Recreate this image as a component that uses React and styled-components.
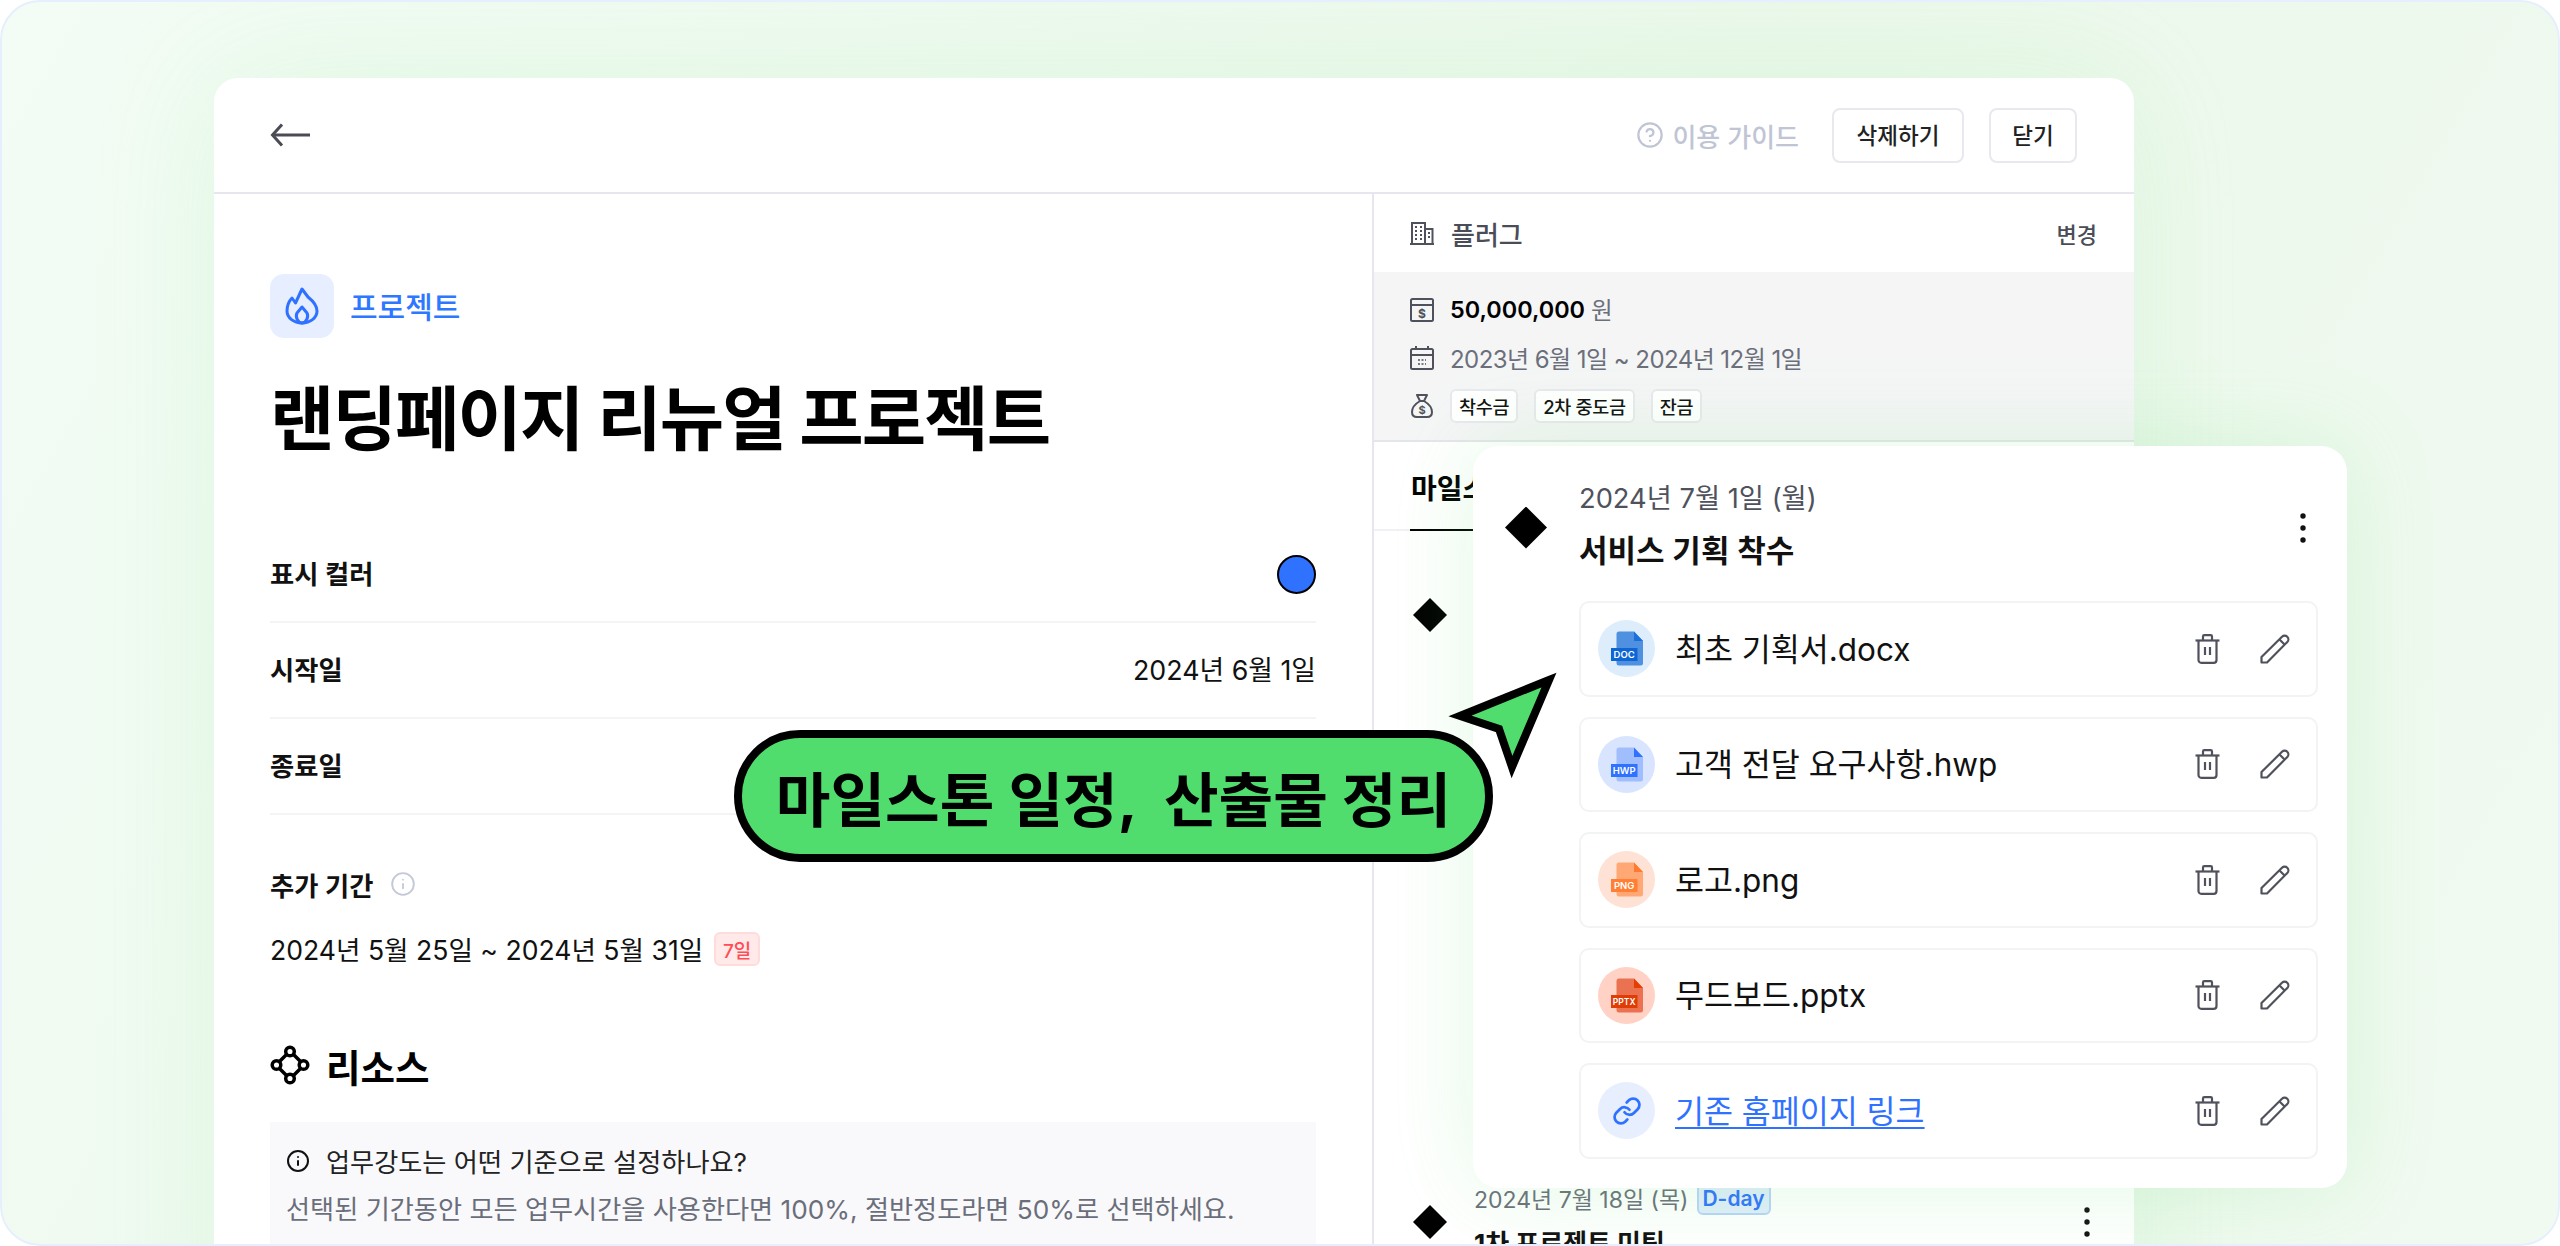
import React from 'react';
import styled, { createGlobalStyle } from 'styled-components';
import { CircleHelp, Info, Link } from 'lucide-react';

const files = [
  { name: '최초 기획서.docx', tag: 'DOC', circle: '#deedfb', page: '#4f90e0', fold: '#1a6fdc', label: '#0e66d4' },
  { name: '고객 전달 요구사항.hwp', tag: 'HWP', circle: '#d9e5ff', page: '#a0bdfd', fold: '#2e72ff', label: '#2e72ff' },
  { name: '로고.png', tag: 'PNG', circle: '#ffe2d6', page: '#ffa875', fold: '#ff7a2e', label: '#ff7f35' },
  { name: '무드보드.pptx', tag: 'PPTX', circle: '#ffd2c5', page: '#eb7250', fold: '#e63d00', label: '#e03c05' },
];

const GlobalStyle = createGlobalStyle`
  * { box-sizing: border-box; }
  body {
    margin: 0;
    background: #fff;
    font-family: Inter, "Noto Sans CJK KR", sans-serif;
  }
`;

const BackIcon = () => (
  <svg width="40" height="24" viewBox="0 0 40 24" fill="none" stroke="#4a4b55" strokeWidth="3">
    <path d="M40 12H3" />
    <path d="M12 1.500 2.500 12l9.500 10.500" />
  </svg>
);

const FlameIcon = () => (
  <svg width="34" height="38" viewBox="0 0 34 38" fill="none" stroke="#2f72ff" strokeWidth="3" strokeLinejoin="round">
    <path d="M17 2l6 8c5 4 9 9 9 14 0 7-7 12-15 12S2 31 2 24c0-5 2-10 5-13l3.500 5L17 2z" />
    <path d="M17 20l5 6c2 4-1 10-5 10s-7-6-5-10l5-6z" />
  </svg>
);

const BuildingIcon = () => (
  <svg width="24" height="24" viewBox="0 0 24 24" fill="none" stroke="#4f525c" strokeWidth="2">
    <path d="M2 23V2h13v21M15 8h7.500v15M0 23h24" />
    <path d="M5 6h2M10 6h2M5 10h2M10 10h2M5 14h2M10 14h2M5 18h2M10 18h2M18 12h2M18 16h2" strokeDasharray="2 1" />
  </svg>
);

const CashIcon = () => (
  <svg width="24" height="24" viewBox="0 0 24 24" fill="none" stroke="#4f525c" strokeWidth="2">
    <rect x="1" y="1" width="22" height="22" rx="1.500" />
    <path d="M1 7h22" />
    <text x="12" y="20" fontSize="12" fontWeight="700" textAnchor="middle" fill="#4f525c" stroke="none" fontFamily="Inter">$</text>
  </svg>
);

const CalendarIcon = () => (
  <svg width="24" height="24" viewBox="0 0 24 24" fill="none" stroke="#4f525c" strokeWidth="2">
    <rect x="1" y="3" width="22" height="20" rx="1.500" />
    <path d="M1 9h22M6 0v4M18 0v4" />
    <path d="M8 14h8M8 18h8" strokeDasharray="2 1.500" strokeWidth="1.500" />
  </svg>
);

const BagIcon = () => (
  <svg width="24" height="24" viewBox="0 0 24 24" fill="none" stroke="#4f525c" strokeWidth="2" strokeLinejoin="round">
    <path d="M7 1h10l-3 6h-4L7 1z" />
    <path d="M10 7C5 10 2 14 2 18c0 3 2 5 5 5h10c3 0 5-2 5-5 0-4-3-8-8-11" />
    <text x="12" y="20" fontSize="11" fontWeight="700" textAnchor="middle" fill="#4f525c" stroke="none" fontFamily="Inter">$</text>
  </svg>
);

const ResourceIcon = () => (
  <svg width="40" height="40" viewBox="0 0 40 40" fill="none" stroke="#000" strokeWidth="3.500">
    <circle cx="20" cy="6.500" r="4.300" />
    <circle cx="33.500" cy="20" r="4.300" />
    <circle cx="20" cy="33.500" r="4.300" />
    <circle cx="6.500" cy="20" r="4.300" />
    <path d="M23.500 9.500l7 7M30.500 23.500l-7 7M16.500 30.500l-7-7M9.500 16.500l7-7" />
  </svg>
);

const TrashIcon = () => (
  <svg width="25" height="30" viewBox="0 0 25 30" fill="none" stroke="#4f525c" strokeWidth="2.200">
    <path d="M0.500 6.500h24" />
    <path d="M8 6.500V2.500a1.300 1.300 0 0 1 1.300-1.300h6.400A1.300 1.300 0 0 1 17 2.500v4" />
    <path d="M3.500 6.500V26a2.800 2.800 0 0 0 2.800 2.800h12.400a2.800 2.800 0 0 0 2.800-2.800V6.500" />
    <path d="M10 13v8M15 13v8" />
  </svg>
);

const PencilIcon = () => (
  <svg width="30" height="30" viewBox="0 0 30 30" fill="none" stroke="#4f525c" strokeWidth="2.200" strokeLinejoin="round">
    <path d="M1.500 28.500V23L22 2.800a3.700 3.700 0 0 1 5.300 5.200L7 28.500H1.500z" />
    <path d="M19.500 5.500l5.300 5.200" />
  </svg>
);

const KebabIcon = () => (
  <svg width="6" height="30" viewBox="0 0 6 30" fill="#111">
    <circle cx="3" cy="3" r="2.700" />
    <circle cx="3" cy="15" r="2.700" />
    <circle cx="3" cy="27" r="2.700" />
  </svg>
);

const FileIcon = ({ tag, circle, page, fold, label }) => (
  <svg width="57" height="57" viewBox="0 0 57 57">
    <circle cx="28.500" cy="28.500" r="28.500" fill={circle} />
    <path d="M21 11.500h15L45 21v22a2.500 2.500 0 0 1-2.500 2.500H21a2.500 2.500 0 0 1-2.500-2.500V14a2.500 2.500 0 0 1 2.500-2.500z" fill={page} />
    <path d="M36 11.500L45 21h-9z" fill={fold} />
    <rect x="13" y="28" width="26.500" height="13" fill={label} />
    <text x="26.200" y="38" fontSize={tag.length > 3 ? 8.500 : 9.500} fontWeight="600" textAnchor="middle" fill="#fff" fontFamily="Inter">{tag}</text>
  </svg>
);

const App = () => (
  <Frame>
    <GlobalStyle />
    <Panel>
      <Header>
        <BackIcon />
        <HeaderActions>
          <Guide>
            <CircleHelp size={28} strokeWidth={1.900} />
            이용 가이드
          </Guide>
          <HeaderButton $width={132}>삭제하기</HeaderButton>
          <HeaderButton $width={88}>닫기</HeaderButton>
        </HeaderActions>
      </Header>
      <Body>
        <LeftColumn>
          <Kind>
            <KindTile><FlameIcon /></KindTile>
            <KindName>프로젝트</KindName>
          </Kind>
          <Title>랜딩페이지 리뉴얼 프로젝트</Title>
          <Fields>
            <Field>
              <FieldLabel>표시 컬러</FieldLabel>
              <ColorDot />
            </Field>
            <Field>
              <FieldLabel>시작일</FieldLabel>
              <FieldValue>2024년 6월 1일</FieldValue>
            </Field>
            <Field>
              <FieldLabel>종료일</FieldLabel>
            </Field>
          </Fields>
          <ExtraLabel>
            추가 기간
            <Info size={26} strokeWidth={1.700} color="#c4c9d9" />
          </ExtraLabel>
          <ExtraValue>
            2024년 5월 25일 ~ 2024년 5월 31일
            <DayBadge>7일</DayBadge>
          </ExtraValue>
          <SectionTitle>
            <ResourceIcon />
            리소스
          </SectionTitle>
          <HelpBox>
            <HelpTitle>
              <Info size={24} strokeWidth={2} color="#111" />
              업무강도는 어떤 기준으로 설정하나요?
            </HelpTitle>
            <HelpText>선택된 기간동안 모든 업무시간을 사용한다면 100%, 절반정도라면 50%로 선택하세요.</HelpText>
          </HelpBox>
        </LeftColumn>
        <RightColumn>
          <ClientRow>
            <ClientName><BuildingIcon />플러그</ClientName>
            <ChangeLink>변경</ChangeLink>
          </ClientRow>
          <Contract>
            <ContractRow>
              <CashIcon />
              <Amount>50,000,000</Amount>
              <Unit>원</Unit>
            </ContractRow>
            <ContractRow>
              <CalendarIcon />
              <Period>2023년 6월 1일 ~ 2024년 12월 1일</Period>
            </ContractRow>
            <ContractRow>
              <BagIcon />
              <Tag>착수금</Tag>
              <Tag>2차 중도금</Tag>
              <Tag>잔금</Tag>
            </ContractRow>
          </Contract>
          <Tabs>
            <ActiveTab>마일스톤</ActiveTab>
          </Tabs>
          <Timeline>
            <Milestone $height={607}>
              <Diamond $size={34} />
            </Milestone>
            <Milestone>
              <Diamond $size={34} />
              <div>
                <MilestoneDate>
                  2024년 7월 18일 (목)
                  <DdayBadge>D-day</DdayBadge>
                </MilestoneDate>
                <MilestoneName>1차 프로젝트 미팅</MilestoneName>
              </div>
              <MilestoneMenu><KebabIcon /></MilestoneMenu>
            </Milestone>
          </Timeline>
        </RightColumn>
      </Body>
    </Panel>

    <FloatCard>
      <CardHead>
        <Diamond $size={42} />
        <CardHeadText>
          <CardDate>2024년 7월 1일 (월)</CardDate>
          <CardName>서비스 기획 착수</CardName>
        </CardHeadText>
        <KebabIcon />
      </CardHead>
      <FileList>
        {files.map((file) => (
          <FileRow key={file.tag}>
            <FileIcon {...file} />
            <FileName>{file.name}</FileName>
            <TrashIcon />
            <PencilIcon />
          </FileRow>
        ))}
        <FileRow>
          <LinkCircle><Link size={30} strokeWidth={2.200} /></LinkCircle>
          <FileName as="a" $link>기존 홈페이지 링크</FileName>
          <TrashIcon />
          <PencilIcon />
        </FileRow>
      </FileList>
    </FloatCard>

    <Callout>마일스톤 일정,  산출물 정리</Callout>
    <CalloutArrow width="120" height="120" viewBox="0 0 120 120">
      <path d="M102 9 13 45 52 58 65 96Z" fill="#50dd6e" stroke="#000" strokeWidth="8" />
    </CalloutArrow>
  </Frame>
);

export default App;

const Frame = styled.div`
  position: relative;
  width: 2560px;
  height: 1246px;
  padding: 76px 0 0 212px;
  overflow: hidden;
  border: 2px solid #e6effe;
  border-radius: 40px;
  background: linear-gradient(120deg, #f3fcf5 0%, #ecf8ec 55%, #f1faf1 100%);
`;

const Panel = styled.div`
  width: 1920px;
  height: 1300px;
  background: #fff;
  border-radius: 24px 24px 0 0;
  box-shadow: 0 0 130px rgba(110, 225, 120, 0.14);
`;

const Header = styled.header`
  display: flex;
  align-items: center;
  justify-content: space-between;
  height: 116px;
  padding: 0 57px 0 56px;
  border-bottom: 2px solid #e6e7ee;
`;

const HeaderActions = styled.div`
  display: flex;
  align-items: center;
  gap: 25px;
`;

const Guide = styled.div`
  display: flex;
  align-items: center;
  gap: 8px;
  margin-right: 8px;
  font-size: 26px;
  font-weight: 500;
  color: #c0c5d5;
`;

const HeaderButton = styled.button`
  width: ${(p) => p.$width}px;
  height: 55px;
  padding: 0 0 2px;
  background: #fff;
  border: 2px solid #e8e8ee;
  border-radius: 8px;
  font-family: inherit;
  font-size: 22.500px;
  font-weight: 500;
  color: #222;
`;

const Body = styled.div`
  display: flex;
`;

const LeftColumn = styled.section`
  width: 1160px;
  height: 1184px;
  padding: 80px 56px 0;
  border-right: 2px solid #e6e7ee;
`;

const Kind = styled.div`
  display: flex;
  align-items: center;
  gap: 16px;
`;

const KindName = styled.span`
  padding-bottom: 3px;
  font-size: 30px;
  font-weight: 500;
  color: #2e78ff;
`;

const KindTile = styled.div`
  display: flex;
  align-items: center;
  justify-content: center;
  width: 64px;
  height: 64px;
  border-radius: 14px;
  background: #e6eeff;
`;

const Title = styled.h1`
  margin: 40px 0 65px;
  font-size: 70px;
  line-height: 84px;
  letter-spacing: -1.900px;
  font-weight: 700;
  color: #000;
`;

const Fields = styled.div`
  display: flex;
  flex-direction: column;
`;

const Field = styled.div`
  display: flex;
  align-items: center;
  justify-content: space-between;
  height: 96px;
  border-bottom: 2px solid #f3f4f6;
`;

const FieldLabel = styled.span`
  padding-bottom: 4px;
  font-size: 26.300px;
  font-weight: 600;
  color: #111;
`;

const FieldValue = styled.span`
  padding-bottom: 4px;
  font-size: 26.800px;
  color: #111;
`;

const ColorDot = styled.span`
  width: 39px;
  height: 39px;
  border: 2px solid #000;
  border-radius: 50%;
  background: #2e72ff;
`;

const ExtraLabel = styled.div`
  display: flex;
  align-items: center;
  gap: 17px;
  height: 32px;
  margin-top: 53px;
  font-size: 26.300px;
  font-weight: 600;
  color: #111;
`;

const ExtraValue = styled.div`
  display: flex;
  align-items: center;
  gap: 11px;
  height: 34px;
  margin-top: 31px;
  font-size: 26.600px;
  color: #111;
`;

const DayBadge = styled.span`
  display: flex;
  align-items: center;
  justify-content: center;
  width: 46px;
  height: 34px;
  margin-top: 2px;
  border: 2px solid #ffdcdc;
  border-radius: 6px;
  background: #ffe9e9;
  font-size: 19px;
  font-weight: 500;
  color: #ff4d55;
`;

const SectionTitle = styled.h2`
  display: flex;
  align-items: center;
  gap: 16px;
  height: 48px;
  margin: 76px 0 33px;
  font-size: 37.500px;
  font-weight: 700;
  color: #000;
`;

const HelpBox = styled.div`
  padding: 21px 16px;
  background: #f9f9fb;
`;

const HelpTitle = styled.div`
  display: flex;
  align-items: center;
  gap: 16px;
  height: 36px;
  font-size: 26.200px;
  color: #222;
`;

const HelpText = styled.div`
  height: 36px;
  margin-top: 13px;
  line-height: 36px;
  font-size: 26.200px;
  color: #6a6e7a;
`;

const RightColumn = styled.section`
  flex: 1;
`;

const ClientRow = styled.div`
  display: flex;
  align-items: center;
  justify-content: space-between;
  height: 78px;
  padding: 0 37px 0 36px;
`;

const ClientName = styled.div`
  display: flex;
  align-items: center;
  gap: 17px;
  font-size: 26px;
  font-weight: 500;
  color: #4a4d57;
`;

const ChangeLink = styled.span`
  font-size: 22px;
  font-weight: 500;
  color: #4a4d57;
`;

const Contract = styled.div`
  display: flex;
  flex-direction: column;
  gap: 14px;
  height: 170px;
  padding: 21px 36px 0;
  background: #f5f5f6;
  border-bottom: 2px solid #e4e6ea;
`;

const ContractRow = styled.div`
  display: flex;
  align-items: center;
  height: 34px;
  gap: 16px;
`;

const Amount = styled.span`
  padding-bottom: 2px;
  font-size: 23.400px;
  font-weight: 600;
  color: #000;
`;

const Unit = styled.span`
  margin-left: -10px;
  padding-bottom: 2px;
  font-size: 23.500px;
  color: #6b6f7b;
`;

const Period = styled.span`
  padding-bottom: 2px;
  font-size: 24px;
  letter-spacing: -0.550px;
  color: #6b6f7b;
`;

const Tag = styled.span`
  display: flex;
  align-items: center;
  height: 34px;
  padding: 0 7px;
  background: #fff;
  border: 2px solid #e8e9ee;
  border-radius: 6px;
  font-size: 18.500px;
  letter-spacing: -0.300px;
  font-weight: 500;
  color: #111;
`;

const Tabs = styled.div`
  display: flex;
  height: 89px;
  padding-left: 36px;
  border-bottom: 2px solid #f0f1f4;
`;

const ActiveTab = styled.div`
  height: 89px;
  padding: 26px 1px 0;
  border-bottom: 2px solid #000;
  font-size: 28px;
  line-height: 42px;
  font-weight: 600;
  color: #000;
`;

const Timeline = styled.div`
  padding: 43px 44px 0 39px;
`;

const Milestone = styled.div`
  display: flex;
  align-items: center;
  gap: 27px;
  ${(p) => p.$height && `height: ${p.$height}px; align-items: flex-start;`}
`;

const Diamond = styled.span`
  flex: none;
  width: ${(p) => p.$size}px;
  height: ${(p) => p.$size}px;
  background: #000;
  clip-path: polygon(50% 0, 100% 50%, 50% 100%, 0 50%);
  ${Milestone} > & {
    margin-top: 24px;
    align-self: flex-start;
  }
`;

const MilestoneDate = styled.div`
  display: flex;
  align-items: center;
  gap: 8px;
  height: 34px;
  font-size: 23px;
  color: #6b6f7b;
`;

const MilestoneName = styled.div`
  margin-top: 8px;
  font-size: 26px;
  font-weight: 700;
  color: #111;
`;

const MilestoneMenu = styled.div`
  display: flex;
  margin-left: auto;
  align-self: flex-start;
  margin-top: 26px;
`;

const DdayBadge = styled.span`
  display: flex;
  align-items: center;
  justify-content: center;
  width: 74px;
  height: 34px;
  border: 2px solid #b9d5fa;
  border-radius: 6px;
  background: #e0eefb;
  font-size: 21px;
  font-weight: 600;
  color: #2f72ff;
`;

const FloatCard = styled.div`
  position: absolute;
  left: 1471px;
  top: 444px;
  width: 874px;
  height: 742px;
  padding: 37px 29px 0 32px;
  background: #fff;
  border-radius: 26px;
  box-shadow: 0 0 90px rgba(110, 225, 120, 0.2);
`;

const CardHead = styled.div`
  display: flex;
  align-items: center;
  gap: 32px;
  padding-right: 12px;
`;

const CardHeadText = styled.div`
  flex: 1;
`;

const CardDate = styled.div`
  height: 34px;
  line-height: 32px;
  font-size: 27.300px;
  color: #4f525c;
`;

const CardName = styled.div`
  height: 40px;
  margin-top: 15px;
  line-height: 38px;
  font-size: 31px;
  font-weight: 600;
  color: #111;
`;

const FileList = styled.div`
  display: flex;
  flex-direction: column;
  gap: 20px;
  margin: 29px 0 0 74px;
`;

const FileRow = styled.div`
  display: flex;
  align-items: center;
  gap: 20px;
  height: 95.500px;
  padding: 0 26px 0 17px;
  border: 2px solid #f2f3f5;
  border-radius: 10px;
  & > svg:last-child {
    margin-left: 20px;
  }
`;

const FileName = styled.span`
  flex: 1;
  padding-bottom: 4px;
  font-size: 31.500px;
  color: ${(p) => (p.$link ? '#2f72ff' : '#111')};
  ${(p) => p.$link && `
    flex: none;
    margin-right: auto;
    text-decoration: underline;
    text-underline-offset: 4px;
    text-decoration-thickness: 2px;
  `}
`;

const LinkCircle = styled.div`
  display: flex;
  align-items: center;
  justify-content: center;
  width: 57px;
  height: 57px;
  border-radius: 50%;
  background: #e7effe;
  color: #2f72ff;
`;

const Callout = styled.div`
  position: absolute;
  left: 732px;
  top: 728px;
  display: flex;
  align-items: center;
  justify-content: center;
  width: 759px;
  height: 132px;
  border: 8px solid #000;
  border-radius: 66px;
  background: #50dd6e;
  white-space: pre;
  font-size: 59.400px;
  font-weight: 700;
  color: #000;
`;

const CalloutArrow = styled.svg`
  position: absolute;
  left: 1445px;
  top: 669px;
`;
